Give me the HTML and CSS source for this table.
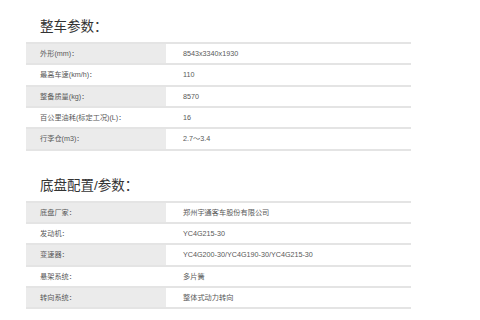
FILE: index.html
```html
<!DOCTYPE html>
<html lang="zh-CN">
<head>
<meta charset="utf-8">
<link rel="stylesheet" href="styles.css">
</head>
<body>
<div class="page">
  <section class="block">
    <h2 class="title">整车参数：</h2>
    <div class="table">
      <div class="row"><div class="label">外形(mm)：</div><div class="value">8543x3340x1930</div></div>
      <div class="row"><div class="label">最高车速(km/h)：</div><div class="value">110</div></div>
      <div class="row"><div class="label">整备质量(kg)：</div><div class="value">8570</div></div>
      <div class="row"><div class="label">百公里油耗(标定工况)(L)：</div><div class="value">16</div></div>
      <div class="row"><div class="label">行李仓(m3)：</div><div class="value">2.7～3.4</div></div>
    </div>
  </section>
  <section class="block second">
    <h2 class="title">底盘配置/参数：</h2>
    <div class="table">
      <div class="row"><div class="label">底盘厂家：</div><div class="value">郑州宇通客车股份有限公司</div></div>
      <div class="row"><div class="label">发动机：</div><div class="value">YC4G215-30</div></div>
      <div class="row"><div class="label">变速器：</div><div class="value">YC4G200-30/YC4G190-30/YC4G215-30</div></div>
      <div class="row"><div class="label">悬架系统：</div><div class="value">多片簧</div></div>
      <div class="row"><div class="label">转向系统：</div><div class="value">整体式动力转向</div></div>
    </div>
  </section>
</div>
</body>
</html>
```
FILE: styles.css
```css
html, body {
  margin: 0;
  padding: 0;
  background: #fff;
}
body {
  font-family: "Liberation Sans", "Noto Sans CJK SC", sans-serif;
  color: #585858;
}
.page {
  width: 385px;
  padding: 17px 0 0 26px;
}
.block.second {
  margin-top: 25px;
}
.title {
  margin: 0 0 5px 14px;
  font-size: 13.5px;
  line-height: 20px;
  font-weight: normal;
  color: #333;
}
.table {
  border-bottom: 2px solid #e4e4e4;
}
.row {
  display: grid;
  grid-template-columns: 140px 1fr;
  border-top: 2px solid #e4e4e4;
  height: 19.33px;
  font-size: 7.2px;
  line-height: 19.33px;
}
.label {
  padding-left: 14px;
  white-space: nowrap;
}
.value {
  padding-left: 17px;
  white-space: nowrap;
}
.row:nth-child(odd) .label {
  background: #ebebeb;
}
```
